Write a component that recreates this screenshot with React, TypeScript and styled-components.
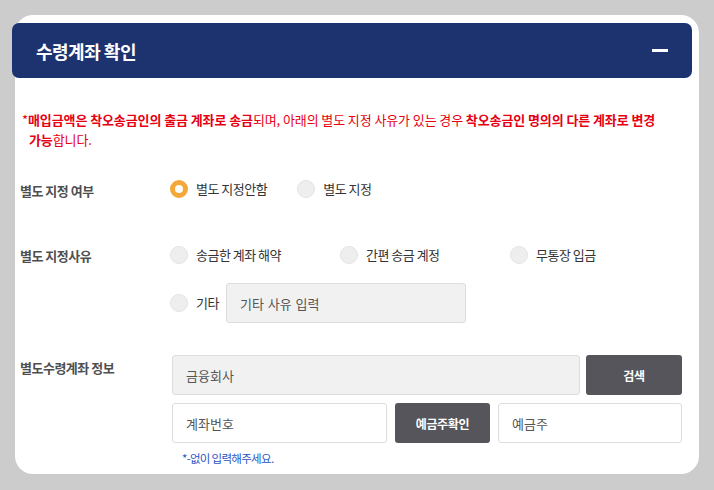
import React from 'react';
import styled, { createGlobalStyle } from 'styled-components';

const Global = createGlobalStyle`
  html, body { margin: 0; padding: 0; background: #cccccc; }
  body { font-family: "Noto Sans CJK KR", "Noto Sans", sans-serif; }
  * { box-sizing: border-box; }
`;

const Page = styled.div`
  padding: 15px 15px 16px 15px;
`;

const Card = styled.section`
  width: 684px;
  height: 459px;
  background: #ffffff;
  border-radius: 18px;
  padding: 8px 0 0 5px;
`;

const Header = styled.header`
  margin-left: -8px;
  width: 680px;
  height: 55px;
  background: #1c3370;
  border-radius: 7px;
  display: flex;
  align-items: center;
  justify-content: space-between;
  padding: 0 24px;
`;

const Title = styled.h2`
  margin: 0;
  color: #ffffff;
  font-size: 18px;
  font-weight: 700;
  letter-spacing: -0.5px;
`;

const Minus = styled.span`
  display: block;
  width: 16px;
  height: 3px;
  background: #ffffff;
`;

const Notice = styled.p`
  margin: 32px 0 0 0;
  padding-left: 9px;
  text-indent: -7px;
  font-size: 13px;
  line-height: 20px;
  color: #e60012;
  letter-spacing: -0.1px;
  white-space: nowrap;
  b { font-weight: 700; }
`;

const Row = styled.div<{ $top: number }>`
  margin-top: ${p => p.$top}px;
  display: grid;
  grid-template-columns: 150px 1fr;
  align-items: start;
`;

const Label = styled.div<{ $pad?: number }>`
  padding-top: ${p => p.$pad ?? 0}px;
  font-size: 13px;
  font-weight: 700;
  line-height: 24px;
  color: #4f4f4f;
  letter-spacing: -0.5px;
`;

const Options = styled.div`
  display: flex;
  align-items: center;
  gap: 30px;
  height: 24px;
`;

const ReasonGrid = styled.div`
  display: grid;
  grid-template-columns: repeat(3, 170px);
  height: 24px;
  align-items: center;
`;

const Option = styled.label`
  display: flex;
  align-items: center;
  gap: 8px;
  font-size: 13px;
  color: #333333;
  letter-spacing: -0.5px;
  line-height: 24px;
`;

const Radio = styled.span<{ $checked?: boolean }>`
  display: inline-block;
  width: 18px;
  height: 18px;
  border-radius: 50%;
  background: ${p => (p.$checked ? '#ffffff' : '#eeeeee')};
  border: ${p => (p.$checked ? '5px solid #f5a83a' : '1px solid #e4e4e4')};
  flex: none;
`;

const EtcLine = styled.div`
  margin-top: 16px;
  display: flex;
  align-items: center;
`;

const Field = styled.input<{ $gray?: boolean }>`
  height: 40px;
  width: 100%;
  border: 1px solid #dddddd;
  border-radius: 3px;
  background: ${p => (p.$gray ? '#f1f1f1' : '#ffffff')};
  padding: 0 13px;
  font-family: inherit;
  font-size: 13px;
  color: #555555;
  outline: none;
  &::placeholder { color: #555555; opacity: 1; }
`;

const EtcField = styled(Field)`
  margin-left: 7px;
  width: 240px;
  word-spacing: 1px;
`;

const Account = styled.div`
  margin-left: 2px;
  width: 510px;
`;

const AccRow1 = styled.div`
  display: grid;
  grid-template-columns: 1fr 96px;
  gap: 6px;
`;

const AccRow2 = styled.div`
  margin-top: 8px;
  display: grid;
  grid-template-columns: 215px 95px 1fr;
  gap: 8px;
`;

const DarkButton = styled.button`
  height: 40px;
  border: none;
  border-radius: 3px;
  background: #55555b;
  color: #ffffff;
  font-family: inherit;
  font-size: 12px;
  font-weight: 700;
  letter-spacing: -0.3px;
`;

const Helper = styled.div`
  margin-top: 7px;
  padding-left: 10px;
  font-size: 11.5px;
  line-height: 16px;
  color: #2c55c4;
  letter-spacing: -0.7px;
`;

export default function App() {
  return (
    <Page>
      <Global />
      <Card>
        <Header>
          <Title>수령계좌 확인</Title>
          <Minus />
        </Header>
        <Notice>
          *<b>매입금액은 착오송금인의 출금 계좌로 송금</b>되며, 아래의 별도 지정 사유가 있는 경우{' '}
          <b>착오송금인 명의의 다른 계좌로 변경</b>
          <br />
          <b>가능</b>합니다.
        </Notice>

        <Row $top={27}>
          <Label $pad={2}>별도 지정 여부</Label>
          <Options>
            <Option><Radio $checked />별도 지정안함</Option>
            <Option><Radio />별도 지정</Option>
          </Options>
        </Row>

        <Row $top={40}>
          <Label $pad={1}>별도 지정사유</Label>
          <div>
            <ReasonGrid>
              <Option><Radio />송금한 계좌 해약</Option>
              <Option><Radio />간편 송금 계정</Option>
              <Option><Radio />무통장 입금</Option>
            </ReasonGrid>
            <EtcLine>
              <Option><Radio />기타</Option>
              <EtcField $gray placeholder="기타 사유 입력" />
            </EtcLine>
          </div>
        </Row>

        <Row $top={32}>
          <Label $pad={1}>별도수령계좌 정보</Label>
          <Account>
            <AccRow1>
              <Field $gray placeholder="금융회사" />
              <DarkButton>검색</DarkButton>
            </AccRow1>
            <AccRow2>
              <Field placeholder="계좌번호" />
              <DarkButton>예금주확인</DarkButton>
              <Field placeholder="예금주" />
            </AccRow2>
            <Helper>*-없이 입력해주세요.</Helper>
          </Account>
        </Row>
      </Card>
    </Page>
  );
}
